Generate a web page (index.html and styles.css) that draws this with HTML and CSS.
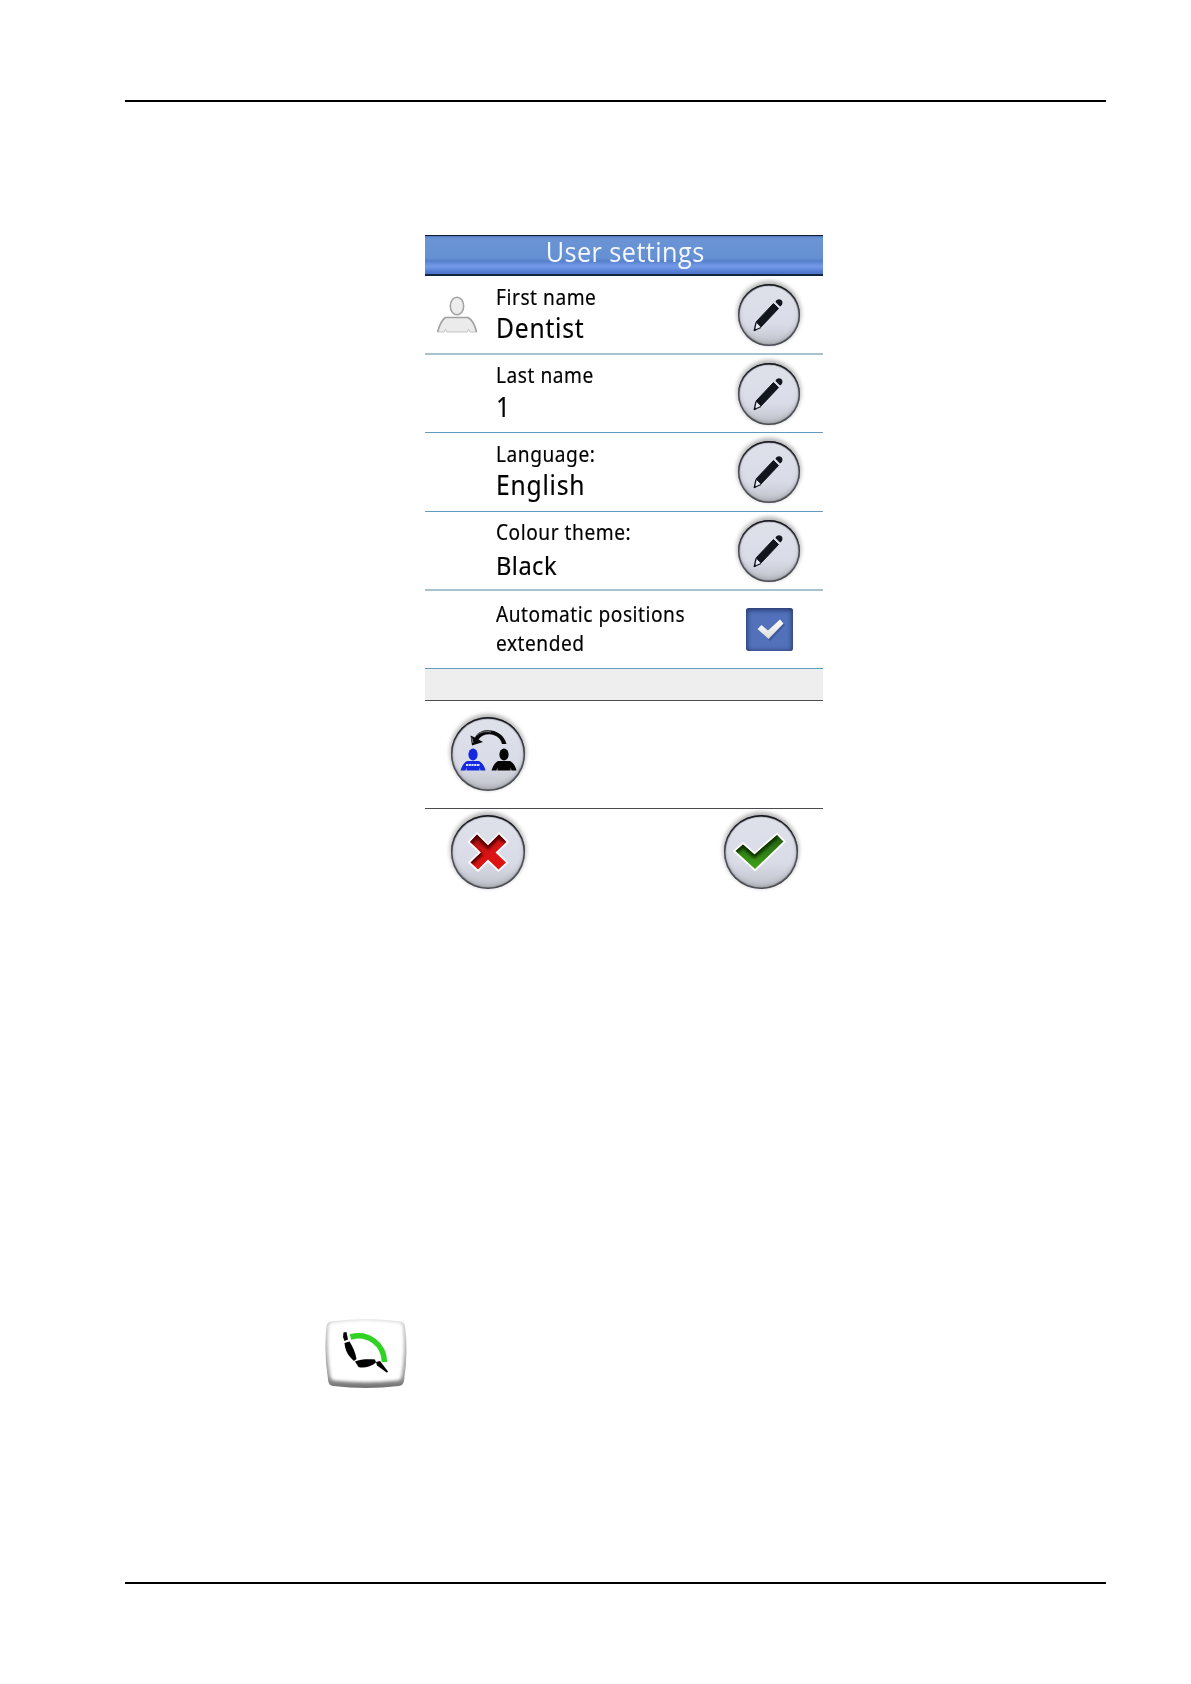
FILE: index.html
```
<!DOCTYPE html>
<html lang="en">
  <head>
    <meta charset="UTF-8" />
    <meta name="viewport" content="width=device-width, initial-scale=1.0" />
    <title>User settings</title>
    <link rel="stylesheet" href="styles.css">
  </head>
  <body>
    <!-- Shared icon shapes -->
    <svg class="defs" width="0" height="0">
      <defs>
        <linearGradient id="redFill" x1="0" y1="0" x2="0.5" y2="1">
          <stop offset="0" stop-color="#8c0d0d" />
          <stop offset="0.5" stop-color="#d41414" />
          <stop offset="1" stop-color="#e01212" />
        </linearGradient>
        <linearGradient id="greenFill" x1="0" y1="0" x2="0" y2="1">
          <stop offset="0" stop-color="#235c10" />
          <stop offset="1" stop-color="#3fa319" />
        </linearGradient>
        <linearGradient id="tickFill" x1="0" y1="0" x2="0" y2="1">
          <stop offset="0" stop-color="#ffffff" />
          <stop offset="1" stop-color="#dcdcd8" />
        </linearGradient>
        <linearGradient id="keyFill" x1="0" y1="0" x2="0" y2="1">
          <stop offset="0" stop-color="#dedede" />
          <stop offset="0.15" stop-color="#c6c6c6" />
          <stop offset="0.8" stop-color="#a2a2a2" />
          <stop offset="1" stop-color="#707070" />
        </linearGradient>
        <filter id="soft" x="-20%" y="-20%" width="140%" height="140%">
          <feGaussianBlur stdDeviation="1.8" />
        </filter>
        <clipPath id="crossClip">
          <path d="M26 19.500L37 30.500L48 19.500L55.500 27L44.500 37.500L55 47.500L47.500 54.500L37 44.500L27 54.500L19.500 47.500L30 37.500L19 27Z" />
        </clipPath>
        <clipPath id="checkClip">
          <path d="M11.500 36L19 29.500L30.500 39.500L53 20L59.500 26.500L31 54Z" />
        </clipPath>
        <symbol id="pencil" viewBox="0 0 62 62">
          <path d="M35.500 19.500L40.500 24.500L23 43L18 38Z" fill="#11151c" stroke="#11151c" stroke-width="1" />
          <path d="M18 38.500L16.300 46.500L23 43.500" fill="#e4e7f0" stroke="#11151c" stroke-width="1.300" stroke-linejoin="round" />
          <path d="M16.300 46.500L16.600 44.500L18 45.800Z" fill="#11151c" stroke="#11151c" />
          <path d="M37.500 18C38.300 14.500 43 14.300 44.300 17.500C45 20 43.500 22 42 22.500Z" fill="#11151c" />
        </symbol>
      </defs>
    </svg>

    <div class="page">
      <div class="panel">
        <div class="title-bar"><span class="title">User settings</span></div>

        <div class="row row-light">
          <div class="row-icon">
            <svg width="42" height="38" viewBox="0 0 42 38">
              <ellipse cx="21" cy="11" rx="6.700" ry="8.800" fill="#ededed" stroke="#a2a2a2" stroke-width="1.500" />
              <path d="M1.500 37C3.500 30 5.500 25 9.500 22.500H32C36.500 25 39 30 40.500 37H34L32.500 34L31.500 37H10.500L9.500 34L8 37Z" fill="#ebebeb" stroke="#c4c4c4" />
              <path d="M1.500 37C3.500 30 5.500 25 9.500 22.500H32C36.500 25 39 30 40.500 37" fill="none" stroke="#a0a0a0" stroke-width="1.500" />
            </svg>
          </div>
          <div class="row-text">
            <div class="label">First name</div>
            <div class="value">Dentist</div>
          </div>
          <div class="round small"><svg width="62" height="62"><use href="#pencil" /></svg></div>
        </div>

        <div class="row row-last-name">
          <div class="row-icon"></div>
          <div class="row-text">
            <div class="label">Last name</div>
            <div class="value">1</div>
          </div>
          <div class="round small"><svg width="62" height="62"><use href="#pencil" /></svg></div>
        </div>

        <div class="row">
          <div class="row-icon"></div>
          <div class="row-text">
            <div class="label">Language:</div>
            <div class="value">English</div>
          </div>
          <div class="round small"><svg width="62" height="62"><use href="#pencil" /></svg></div>
        </div>

        <div class="row row-light row-theme">
          <div class="row-icon"></div>
          <div class="row-text">
            <div class="label">Colour theme:</div>
            <div class="value">Black</div>
          </div>
          <div class="round small"><svg width="62" height="62"><use href="#pencil" /></svg></div>
        </div>

        <div class="row row-check">
          <div class="row-icon"></div>
          <div class="row-text">
            <div class="label">Automatic positions<br />extended</div>
          </div>
          <div class="checkbox">
            <svg width="47" height="43" viewBox="0 0 47 43">
              <path d="M13 22.500L17 18.500L23.500 24L35.500 13L39 17L24 33Z" fill="#33498a" opacity="0.6" />
              <path d="M11.500 21L15.500 17L22 22.500L34 11.500L37.500 15.500L22.500 31Z" fill="url(#tickFill)" />
            </svg>
          </div>
        </div>

        <div class="spacer"></div>

        <div class="copy-user">
          <div class="round">
            <svg width="74" height="74" viewBox="0 0 74 74">
              <path d="M55.500 27C53 17 44 12.500 35 13.300C29 14 25.500 17 24 20.500L19.500 18.500L21 28.500L32 25L27.500 22.500C30.500 18 37 16.300 42.500 18C47.500 19.500 50 23 51 27Z" fill="#090909" />
              <path d="M25.500 18.500C29 14.800 35 13.900 40 15" fill="none" stroke="#8b8d92" stroke-width="0.900" />
              <path d="M20.700 20.500L22 26" stroke="#9b9da2" stroke-width="0.800" />
              <ellipse cx="22" cy="37.500" rx="4.600" ry="6" fill="#1328e0" />
              <path d="M9.500 53.500C11 49 13 45.500 16 44H28C31 45.500 33.500 49 34.500 53.500H29.500L28.500 50.500V53.500H15.500V50.500L14.500 53.500Z" fill="#1328e0" />
              <path d="M15 48H29" stroke="#d6ddff" stroke-width="2.200" stroke-dasharray="2.200 0.500" />
              <ellipse cx="53" cy="37.500" rx="4.600" ry="6" fill="#050505" />
              <path d="M40.500 53.500C42 49 44 45.500 47 44H59C62 45.500 64.500 49 65.500 53.500H60.500L59.500 50.500V53.500H46.500V50.500L45.500 53.500Z" fill="#050505" />
            </svg>
          </div>
        </div>

        <div class="actions">
          <div class="round">
            <svg width="74" height="74" viewBox="0 0 74 74">
              <path d="M26 19.500L37 30.500L48 19.500L55.500 27L44.500 37.500L55 47.500L47.500 54.500L37 44.500L27 54.500L19.500 47.500L30 37.500L19 27Z" fill="url(#redFill)" stroke="#fff" stroke-width="3.600" paint-order="stroke" />
              <g clip-path="url(#crossClip)">
                <path d="M19 27L26 19.500L37 30.500L48 19.500L55 26M19 47.500L30 37.500" fill="none" stroke="#500" stroke-width="6" filter="url(#soft)" />
              </g>
            </svg>
          </div>
          <div class="round">
            <svg width="74" height="74" viewBox="0 0 74 74">
              <path d="M11.500 36L19 29.500L30.500 39.500L53 20L59.500 26.500L31 54Z" fill="url(#greenFill)" stroke="#fff" stroke-width="3.600" paint-order="stroke" />
              <g clip-path="url(#checkClip)">
                <path d="M11.500 36L19 29.500L30.500 39.500L53 20" fill="none" stroke="#0b3002" stroke-width="6" filter="url(#soft)" />
              </g>
            </svg>
          </div>
        </div>
      </div>

      <!-- Chair position key -->
      <svg class="chair-key" width="84" height="71" viewBox="0 0 84 71">
        <path d="M6 3.500Q42 -1.500 77 3.500Q80.500 4.500 81 8Q84.500 35 80 63Q79 67.500 75 68Q42 72 9 68Q5 67.500 4.200 63Q-0.500 35 2.500 8Q3 4.500 6 3.500Z" fill="url(#keyFill)" />
        <path d="M8 4.500Q42 -0.500 75 4.500Q78.500 5.500 79 9Q81.500 33 77.500 58Q77 62 73 62.500Q42 66 11 62.500Q7 62 6.500 58Q2.500 33 4.500 9Q5 5.500 8 4.500Z" fill="#fff" filter="url(#soft)" />
        <path d="M26.500 19C44 14 60 26 60.500 44" fill="none" stroke="#2fd321" stroke-width="5.500" />
        <path d="M19.500 14.500L22.500 14L24 21.500L20.500 23L19 19Z" />
        <path d="M20.500 25L25.500 23.500C29 29 31.500 35 32.500 41L30 43C24 38 21 32 20.500 25Z" />
        <path d="M31 43.500C36 41 45 41 51 41.500L52 44.500C47 49 39 50.500 34.500 49Z" />
        <path d="M52 44L56 43L64 53.500L63 54.800L53 47.500Z" />
      </svg>
    </div>
  </body>
</html>
```
FILE: styles.css
```
body {
  margin: 0;
  background-color: #fff;
  color: #000;
  font-family: "Noto Sans", "Open Sans", sans-serif;
}

.defs {
  display: block;
}

/* Page with a rule at the top and the bottom */
.page {
  width: 981px;
  height: 1480px;
  margin: 100px 0 0 124.500px;
  border-top: 2px solid #000;
  border-bottom: 2px solid #000;
}

/* Settings panel */
.panel {
  width: 398px;
  margin: 133px 0 0 300.500px;
}

.title-bar {
  height: 41px;
  box-sizing: border-box;
  border-top: 1px solid #131c33;
  border-bottom: 2px solid #15233f;
  background: linear-gradient(#5379b8, #6a94d4 6%, #6590d3 58%, #5580cc 66%, #7298e6 78%, #6d93e4 84%, #4e78cb 96%);
  text-align: center;
}

.title {
  display: inline-block;
  padding-left: 2px;
  font-family: "Open Sans", "Noto Sans", sans-serif;
  font-size: 28px;
  line-height: 30px;
  letter-spacing: 0.500px;
  color: #f5f8ff;
  transform: scaleX(0.9);
}

.row {
  display: flex;
  box-sizing: border-box;
  height: 79px;
  border-bottom: 1px solid #649abf;
}

.row-light {
  border-bottom: 2px solid #a8c3cf;
}

.row-last-name,
.row-check {
  height: 78px;
}

.row-icon {
  width: 71px;
  box-sizing: border-box;
  padding: 19px 0 0 11px;
}

.row-text {
  width: 242px;
  padding-top: 6px;
  white-space: nowrap;
}

.label,
.value {
  transform: scaleX(0.91);
  transform-origin: left;
  -webkit-text-stroke: 0.200px #000;
}

.label {
  font-size: 21px;
  line-height: 30px;
  letter-spacing: 0.600px;
}

.value {
  font-size: 27px;
  line-height: 32px;
  letter-spacing: 0.900px;
}

.row-last-name .row-text {
  padding-top: 5px;
}

.row-last-name .value {
  margin-top: 1px;
}

.row-theme .label {
  margin-top: -1px;
}

.row-theme .value {
  margin-top: 2px;
  font-size: 26px;
  letter-spacing: 0.500px;
}

.row-check .row-text {
  width: 250px;
  padding-top: 9px;
}

.row-check .label {
  line-height: 29px;
}

.checkbox {
  width: 47px;
  height: 43px;
  margin-top: 17px;
  border-radius: 3px;
  background-color: #5271ba;
  box-shadow: inset 0 1px 4px 1.500px #2b3e73;
}

/* Round buttons */
.round {
  width: 74px;
  height: 74px;
  border-radius: 50%;
  background: linear-gradient(#dfe1ea, #d9dce7 65%, #bfc1c9);
  box-shadow: inset 0 1.500px 1px #14161b, inset 0 0 1px 1.500px #45484e, inset 0 -3px 5px #a3a5aa, 0 -2px 4px 1px rgba(0, 0, 0, 0.3);
}

.round.small {
  width: 62px;
  height: 62px;
  margin-top: 8px;
}

.row-last-name .round.small {
  margin-top: 7.500px;
}

.round svg,
.checkbox svg {
  display: block;
}

.spacer {
  height: 32px;
  box-sizing: border-box;
  border-bottom: 1px solid #4b4b4f;
  background-color: #eee;
}

.copy-user {
  height: 108px;
  box-sizing: border-box;
  padding: 16px 0 0 25.500px;
  border-bottom: 1px solid #4b4b4f;
}

.actions {
  display: flex;
  justify-content: space-between;
  padding: 6px 25px 0 25.500px;
}

.chair-key {
  display: block;
  margin: 429px 0 0 199.500px;
}
```
